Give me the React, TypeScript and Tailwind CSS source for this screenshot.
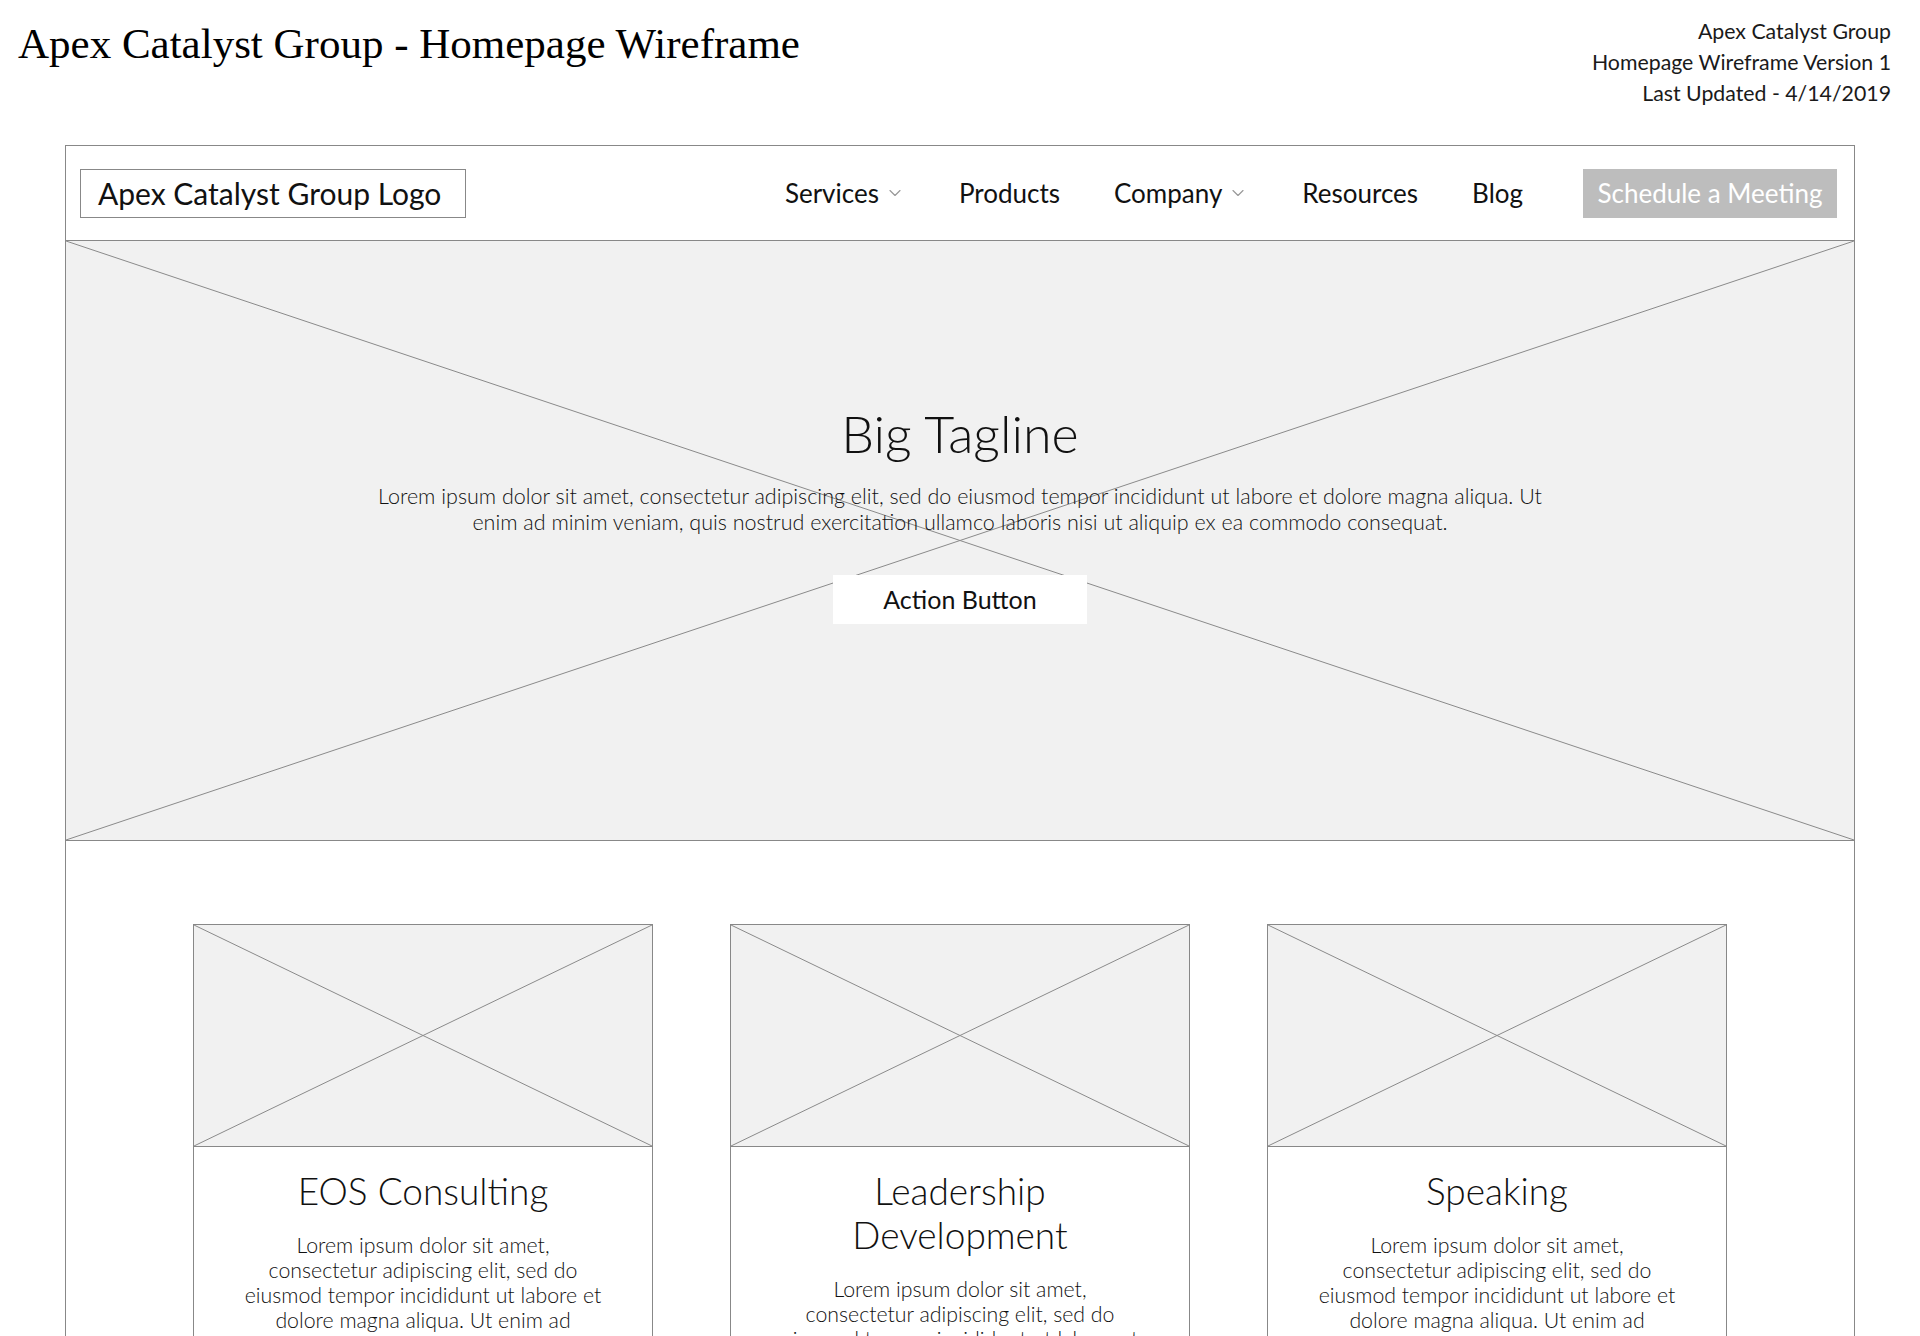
import { ChevronDown } from "lucide-react"

const sans = "font-['Lato','Noto_Sans',sans-serif]"

const navItems = [
  { label: "Services", dropdown: true },
  { label: "Products", dropdown: false },
  { label: "Company", dropdown: true },
  { label: "Resources", dropdown: false },
  { label: "Blog", dropdown: false },
]

const cards = [
  { title: ["EOS Consulting"] },
  { title: ["Leadership", "Development"] },
  { title: ["Speaking"] },
]

// placeholder cross drawn over a grey box
function Cross() {
  return (
    <svg className="absolute inset-0 h-full w-full" viewBox="0 0 100 100" preserveAspectRatio="none">
      <line x1="0" y1="0" x2="100" y2="100" stroke="#8a8a8a" strokeWidth="1" vectorEffect="non-scaling-stroke" />
      <line x1="0" y1="100" x2="100" y2="0" stroke="#8a8a8a" strokeWidth="1" vectorEffect="non-scaling-stroke" />
    </svg>
  )
}

export default function App() {
  return (
    <div className={`h-screen overflow-hidden bg-white text-[#111] ${sans}`}>
      {/* Doc header */}
      <div className="flex h-[145px] items-start justify-between pl-[18px] pr-[29px]">
        <h1 className="pt-[17px] font-['Liberation_Serif',serif] text-[43px] leading-[53px] text-black">
          Apex Catalyst Group - Homepage Wireframe
        </h1>
        <div className="pt-[16px] text-right text-[21.3px] leading-[31px] text-[#1a1a1a]">
          <div>Apex Catalyst Group</div>
          <div>Homepage Wireframe Version 1</div>
          <div>Last Updated - 4/14/2019</div>
        </div>
      </div>

      {/* Page frame */}
      <div className="mx-[65px] border border-[#888] pb-20">
        <nav className="flex h-[95px] items-center justify-between border-b border-[#888] pl-[14px] pr-[17px]">
          <div className="flex h-[49px] w-[386px] items-center border border-[#888] px-[17px] text-[30px]">
            Apex Catalyst Group Logo
          </div>
          <div className="flex items-center">
            <ul className="mr-[60px] flex items-center gap-[54px] text-[26px]">
              {navItems.map((item) => (
                <li key={item.label} className="flex items-center gap-[6px]">
                  <span>{item.label}</span>
                  {item.dropdown && <ChevronDown className="h-[20px] w-[20px] text-[#999]" strokeWidth={1.4} />}
                </li>
              ))}
            </ul>
            <button className="h-[49px] w-[254px] bg-[#bdbdbd] text-[26px] text-white">Schedule a Meeting</button>
          </div>
        </nav>

        {/* Hero */}
        <section className="relative h-[600px] border-b border-[#888] bg-[#f1f1f1]">
          <Cross />
          <div className="relative flex flex-col items-center pt-[162px] text-center">
            <h2 className="text-[52px] font-light leading-[60px]">Big Tagline</h2>
            <p className="mt-[20px] text-[21.5px] font-light leading-[26px] text-[#111]">
              Lorem ipsum dolor sit amet, consectetur adipiscing elit, sed do eiusmod tempor incididunt ut labore et dolore magna aliqua. Ut
              <br />
              enim ad minim veniam, quis nostrud exercitation ullamco laboris nisi ut aliquip ex ea commodo consequat.
            </p>
            <button className="mt-[40px] h-[49px] w-[254px] bg-white text-[25px]">Action Button</button>
          </div>
        </section>

        {/* Services cards */}
        <section className="flex justify-center gap-[77px] pt-[83px]">
          {cards.map((card) => (
            <div key={card.title.join(" ")} className="w-[460px] border border-[#888]">
              <div className="relative h-[222px] border-b border-[#888] bg-[#f1f1f1]">
                <Cross />
              </div>
              <div className="px-[20px] pb-10 pt-[22px] text-center">
                <h3 className="text-[37px] font-light leading-[44px]">
                  {card.title.map((t) => (
                    <div key={t}>{t}</div>
                  ))}
                </h3>
                <p className="mt-[20px] text-[21.3px] font-light leading-[25px] text-[#111]">
                  Lorem ipsum dolor sit amet,
                  <br />
                  consectetur adipiscing elit, sed do
                  <br />
                  eiusmod tempor incididunt ut labore et
                  <br />
                  dolore magna aliqua. Ut enim ad
                  <br />
                  minim veniam, quis nostrud
                  <br />
                  exercitation ullamco laboris nisi ut
                  <br />
                  aliquip ex ea commodo consequat.
                </p>
              </div>
            </div>
          ))}
        </section>
      </div>
    </div>
  )
}
